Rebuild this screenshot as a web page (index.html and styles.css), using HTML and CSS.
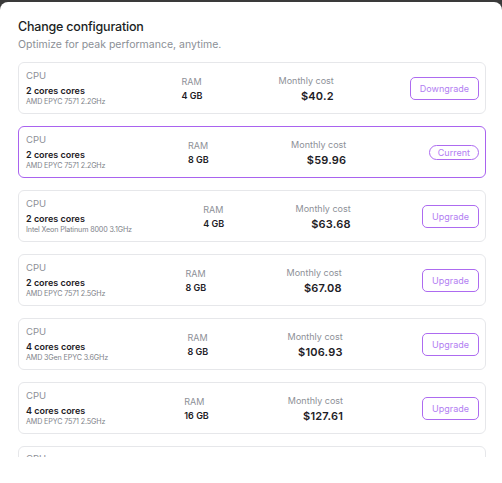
FILE: index.html
```html
<!DOCTYPE html>
<html lang="en">
<head>
<meta charset="utf-8">
<title>Change configuration</title>
<link rel="stylesheet" href="styles.css">
</head>
<body>
<div class="modal">
  <h1 class="title">Change configuration</h1>
  <p class="subtitle">Optimize for peak performance, anytime.</p>
  <div class="list">
    <div class="card">
      <div class="cpu"><div class="label">CPU</div><div class="cores">2 cores cores</div><div class="model">AMD EPYC 7571 2.2GHz</div></div>
      <div class="ram"><div class="label">RAM</div><div class="value">4 GB</div></div>
      <div class="cost"><div class="label">Monthly cost</div><div class="price">$40.2</div></div>
      <button class="btn">Downgrade</button>
    </div>
    <div class="card active">
      <div class="cpu"><div class="label">CPU</div><div class="cores">2 cores cores</div><div class="model">AMD EPYC 7571 2.2GHz</div></div>
      <div class="ram"><div class="label">RAM</div><div class="value">8 GB</div></div>
      <div class="cost"><div class="label">Monthly cost</div><div class="price">$59.96</div></div>
      <span class="pill">Current</span>
    </div>
    <div class="card">
      <div class="cpu"><div class="label">CPU</div><div class="cores">2 cores cores</div><div class="model">Intel Xeon Platinum 8000 3.1GHz</div></div>
      <div class="ram"><div class="label">RAM</div><div class="value">4 GB</div></div>
      <div class="cost"><div class="label">Monthly cost</div><div class="price">$63.68</div></div>
      <button class="btn">Upgrade</button>
    </div>
    <div class="card">
      <div class="cpu"><div class="label">CPU</div><div class="cores">2 cores cores</div><div class="model">AMD EPYC 7571 2.5GHz</div></div>
      <div class="ram"><div class="label">RAM</div><div class="value">8 GB</div></div>
      <div class="cost"><div class="label">Monthly cost</div><div class="price">$67.08</div></div>
      <button class="btn">Upgrade</button>
    </div>
    <div class="card">
      <div class="cpu"><div class="label">CPU</div><div class="cores">4 cores cores</div><div class="model">AMD 3Gen EPYC 3.6GHz</div></div>
      <div class="ram"><div class="label">RAM</div><div class="value">8 GB</div></div>
      <div class="cost"><div class="label">Monthly cost</div><div class="price">$106.93</div></div>
      <button class="btn">Upgrade</button>
    </div>
    <div class="card">
      <div class="cpu"><div class="label">CPU</div><div class="cores">4 cores cores</div><div class="model">AMD EPYC 7571 2.5GHz</div></div>
      <div class="ram"><div class="label">RAM</div><div class="value">16 GB</div></div>
      <div class="cost"><div class="label">Monthly cost</div><div class="price">$127.61</div></div>
      <button class="btn">Upgrade</button>
    </div>
    <div class="card peek">
      <div class="cpu"><div class="label">CPU</div></div>
    </div>
  </div>
</div>
</body>
</html>
```

FILE: styles.css
```css
html, body {
  margin: 0;
  padding: 0;
  height: 100%;
}
body {
  background: #3a3a3a;
  font-family: Inter, "Noto Sans", sans-serif;
  overflow: hidden;
}
.modal {
  margin-top: 2px;
  height: 481px;
  box-sizing: border-box;
  background: #ffffff;
  border-radius: 8px 8px 0 0;
  padding: 17px 16px 0 18px;
}
.title {
  margin: 0;
  font-size: 12.5px;
  line-height: 16px;
  font-weight: 500;
  color: #1c1f24;
  letter-spacing: -0.2px;
}
.subtitle {
  margin: 3px 0 0;
  font-size: 10.5px;
  line-height: 14px;
  color: #8b8f96;
}
.list {
  margin-top: 10px;
  height: 395px;
  overflow: hidden;
  display: flex;
  flex-direction: column;
  gap: 12px;
}
.card {
  flex: none;
  height: 52px;
  box-sizing: border-box;
  border: 1px solid #e6e7ea;
  border-radius: 6px;
  padding: 0 6px 0 7px;
  display: flex;
  align-items: center;
  justify-content: space-between;
}
.card.active {
  border-color: #a963ef;
}
.card.peek {
  align-items: flex-start;
  padding-top: 5px;
}
.cpu .label {
  font-size: 9.5px;
  line-height: 13px;
  color: #8d9097;
}
.cores {
  margin-top: 3px;
  font-size: 9px;
  line-height: 12px;
  font-weight: 600;
  color: #1d2025;
}
.model {
  font-size: 7.2px;
  line-height: 10px;
  color: #80838a;
  letter-spacing: -0.15px;
}
.ram .label,
.cost .label {
  font-size: 9px;
  line-height: 13px;
  color: #8d9097;
}
.value {
  margin-top: 2px;
  font-size: 9px;
  line-height: 12px;
  font-weight: 600;
  color: #1d2025;
}
.cost {
  text-align: right;
}
.price {
  margin-top: 2px;
  font-size: 11px;
  line-height: 14px;
  font-weight: 600;
  color: #1d2025;
  letter-spacing: 0.2px;
}
.btn {
  font-family: inherit;
  background: #ffffff;
  border: 1px solid #ad6bf0;
  border-radius: 5px;
  color: #b27ef2;
  font-size: 9px;
  height: 23px;
  padding: 0 9px;
  cursor: pointer;
}
.pill {
  display: inline-flex;
  align-items: center;
  height: 15px;
  box-sizing: border-box;
  border: 1px solid #ad6bf0;
  border-radius: 8px;
  color: #b27ef2;
  font-size: 9px;
  padding: 0 8px;
}
```
